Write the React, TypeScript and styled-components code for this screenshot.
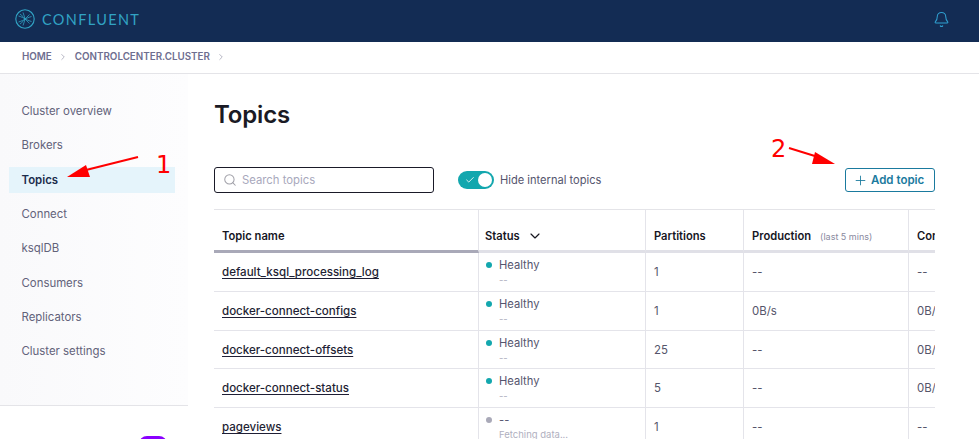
import styled, { createGlobalStyle } from "styled-components";
import { Bell, Check, ChevronDown, ChevronRight, Plus, Search } from "lucide-react";

const GlobalStyle = createGlobalStyle`
  html, body {
    margin: 0;
    height: 100%;
    overflow: hidden;
    background: #fff;
  }
  body {
    font-family: Inter, "Liberation Sans", sans-serif;
  }
`;

const Page = styled.div`
  height: 439px;
  overflow: hidden;
  position: relative;
  width: 979px;
`;

const TopBar = styled.header`
  align-items: center;
  background: #132c54;
  box-sizing: border-box;
  display: flex;
  height: 42px;
  justify-content: space-between;
  padding: 0 29px 4px 15px;
`;

const Brand = styled.div`
  align-items: center;
  color: #31a3c4;
  display: flex;
  font-family: Lato, Inter, sans-serif;
  font-size: 14.5px;
  gap: 7px;
  letter-spacing: 1.35px;
`;

const NotifyButton = styled.span`
  color: #2f9fd0;
  display: flex;
`;

const Crumbs = styled.nav`
  align-items: center;
  border-bottom: 1px solid #e4e4e8;
  box-sizing: border-box;
  color: #6e6e90;
  display: flex;
  font-size: 9.8px;
  font-weight: 600;
  height: 32px;
  padding: 0 0 2px 22px;
`;

const CrumbArrow = styled.span`
  color: #a8a8b8;
  display: flex;
  margin: 0 7px 0 6px;
`;

const Body = styled.div`
  display: flex;
  height: 365px;
`;

const Sidebar = styled.aside`
  background: linear-gradient(90deg, #f9f9fb, #fdfdfe);
  flex: 0 0 188px;
  overflow: hidden;
  padding-top: 24px;
  position: relative;
`;

const NavItem = styled.div<{ $active?: boolean }>`
  align-items: center;
  background: ${({ $active }) => ($active ? "#e5f4fb" : "transparent")};
  color: ${({ $active }) => ($active ? "#1c2c4c" : "#62627a")};
  display: flex;
  font-size: 11.4px;
  font-weight: ${({ $active }) => ($active ? 600 : 400)};
  height: 26px;
  margin: 0 13px 8.35px 9px;
  padding-left: 12.5px;
`;

const SideFooter = styled.div`
  background: #fff;
  border-top: 1px solid #e4e4e8;
  bottom: 0;
  height: 33px;
  left: 0;
  position: absolute;
  right: 0;
`;

const PurpleBadge = styled.span`
  background: #8a00ff;
  border-radius: 8px;
  height: 24px;
  left: 139px;
  position: absolute;
  top: 30px;
  width: 28px;
`;

const Main = styled.main`
  flex: 1;
  min-width: 0;
  padding: 26px 44px 0 26px;
`;

const Title = styled.h1`
  color: #1a1a24;
  font-size: 24px;
  font-weight: 600;
  letter-spacing: -0.15px;
  line-height: 30px;
  margin: 0 0 37px;
`;

const Toolbar = styled.div`
  align-items: center;
  display: flex;
  height: 26px;
  margin-bottom: 16px;
`;

const SearchBox = styled.label`
  align-items: center;
  border: 1px solid #1a1a28;
  border-radius: 3px;
  box-sizing: border-box;
  color: #a8a8bc;
  display: flex;
  font-size: 11.3px;
  gap: 5px;
  height: 26px;
  padding-left: 8px;
  width: 220px;
`;

const SearchIcon = styled.span`
  color: #a0a0a8;
  display: flex;
`;

const ToggleWrap = styled.div`
  align-items: center;
  color: #55556e;
  display: flex;
  font-size: 11.1px;
  gap: 6px;
  margin-left: 24px;
`;

const ToggleTrack = styled.span`
  align-items: center;
  background: #13a7ae;
  border-radius: 9px;
  box-sizing: border-box;
  color: #fff;
  display: flex;
  height: 18px;
  justify-content: space-between;
  padding: 0 2px 0 7px;
  width: 36px;
`;

const ToggleKnob = styled.span`
  background: #fff;
  border-radius: 50%;
  height: 14px;
  width: 14px;
`;

const AddButton = styled.button`
  align-items: center;
  background: #fff;
  border: 1px solid #1a7a9e;
  border-radius: 3px;
  box-sizing: border-box;
  color: #1a7a9e;
  display: flex;
  font-family: inherit;
  font-size: 11.5px;
  font-weight: 600;
  gap: 3px;
  height: 24px;
  margin-left: auto;
  padding: 0 0 0 7px;
  white-space: nowrap;
  width: 90px;
`;

const TableClip = styled.div`
  border-top: 1px solid #e4e4e8;
  overflow: hidden;
  width: 721px;
`;

const Table = styled.div`
  width: 800px;
`;

const Row = styled.div<{ $height: number }>`
  border-bottom: 1px solid #e4e4ea;
  box-sizing: border-box;
  display: grid;
  grid-template-columns: 265px 167px 98px 165px 92px;
  height: ${({ $height }) => $height}px;
`;

const HeadRow = styled(Row)`
  border-bottom: 0;
`;

const HeadCell = styled.div<{ $first?: boolean; $inset?: number }>`
  align-items: center;
  border-bottom: 3px solid ${({ $first }) => ($first ? "#a9a9b8" : "#e0e0e7")};
  border-right: 1px solid #e4e4ea;
  color: #16161f;
  display: flex;
  font-size: 11.2px;
  font-weight: 600;
  gap: 7px;
  padding: 12px 0 0 ${({ $inset }) => $inset ?? 8}px;
  white-space: nowrap;
`;

const HeadNote = styled.span`
  color: #8a8aa0;
  font-size: 9px;
  font-weight: 400;
  margin-left: 2px;
`;

const Cell = styled.div`
  align-items: center;
  border-right: 1px solid #e4e4ea;
  color: #55556a;
  display: flex;
  font-size: 11.4px;
  padding-left: 8px;
  white-space: nowrap;
`;

const TopicLink = styled.a`
  color: #1f1f35;
  font-size: 11.55px;
  font-weight: 500;
  text-decoration: underline;
  text-underline-offset: 2px;
`;

const StatusCell = styled.div`
  border-right: 1px solid #e4e4ea;
  display: grid;
  grid-template-columns: 13px 1fr;
  padding: 5px 0 0 7px;
`;

const Dot = styled.span<{ $muted?: boolean }>`
  background: ${({ $muted }) => ($muted ? "#a9a9b8" : "#13a7ae")};
  border-radius: 50%;
  height: 6px;
  margin-top: 4px;
  width: 6px;
`;

const StatusText = styled.div`
  color: #55556e;
  font-size: 11.2px;
  line-height: 15px;
`;

const StatusNote = styled.div`
  color: #b0b0c0;
  font-size: 9.5px;
  line-height: 12px;
  margin-top: 1px;
  white-space: nowrap;
`;

const Annotations = styled.svg`
  height: 439px;
  left: 0;
  pointer-events: none;
  position: absolute;
  top: 0;
  width: 979px;
`;

const Callout = styled.span<{ $left: number; $top: number }>`
  color: #ff0000;
  font-family: "DejaVu Sans", sans-serif;
  font-size: 24px;
  left: ${({ $left }) => $left}px;
  line-height: 28px;
  position: absolute;
  top: ${({ $top }) => $top}px;
`;

const navItems = [
  "Cluster overview",
  "Brokers",
  "Topics",
  "Connect",
  "ksqlDB",
  "Consumers",
  "Replicators",
  "Cluster settings",
];

const topics = [
  { name: "default_ksql_processing_log", partitions: "1", production: "--", consumption: "--", height: 39 },
  { name: "docker-connect-configs", partitions: "1", production: "0B/s", consumption: "0B/s", height: 39 },
  { name: "docker-connect-offsets", partitions: "25", production: "--", consumption: "0B/s", height: 38 },
  { name: "docker-connect-status", partitions: "5", production: "--", consumption: "0B/s", height: 39 },
  { name: "pageviews", partitions: "1", production: "--", consumption: "--", height: 39, pending: true },
];

function ConfluentMark() {
  return (
    <svg width="20" height="20" viewBox="0 0 20 20" fill="none" stroke="#31a3c4">
      <circle cx="10" cy="10" r="9.2" strokeWidth="1.1" />
      <path d="M3.5 7C7 8 8.5 9 10 10 8.5 11 7 12 3.5 13M5 5C7.5 7 9 8.5 10 10 9 11.5 7.5 13 5 15M8 3.5C9 6 9.5 8 10 10 9.5 12 9 14 8 16.5" strokeWidth="0.8" />
      <path d="M16.5 7.5C13 8.5 11.5 9.5 10 10 11.5 10.5 13 11.5 16.5 12.5M14.5 5.5C12.5 7.5 11 9 10 10 11 11 12.5 12.5 14.5 14.5" strokeWidth="0.8" />
    </svg>
  );
}

export default function App() {
  return (
    <Page>
      <GlobalStyle />
      <TopBar>
        <Brand>
          <ConfluentMark />
          CONFLUENT
        </Brand>
        <NotifyButton>
          <Bell size={17} strokeWidth={1.5} />
        </NotifyButton>
      </TopBar>
      <Crumbs>
        HOME
        <CrumbArrow><ChevronRight size={10} /></CrumbArrow>
        CONTROLCENTER.CLUSTER
        <CrumbArrow><ChevronRight size={10} /></CrumbArrow>
      </Crumbs>
      <Body>
        <Sidebar>
          {navItems.map((item) => (
            <NavItem key={item} $active={item === "Topics"}>{item}</NavItem>
          ))}
          <SideFooter>
            <PurpleBadge />
          </SideFooter>
        </Sidebar>
        <Main>
          <Title>Topics</Title>
          <Toolbar>
            <SearchBox>
              <SearchIcon><Search size={14} strokeWidth={1.75} /></SearchIcon>
              Search topics
            </SearchBox>
            <ToggleWrap>
              <ToggleTrack>
                <Check size={10} strokeWidth={2} />
                <ToggleKnob />
              </ToggleTrack>
              Hide internal topics
            </ToggleWrap>
            <AddButton>
              <Plus size={15} strokeWidth={1.4} />
              Add topic
            </AddButton>
          </Toolbar>
          <TableClip>
            <Table>
              <HeadRow $height={43}>
                <HeadCell $first>Topic name</HeadCell>
                <HeadCell $inset={6}>Status <ChevronDown size={16} strokeWidth={1.75} /></HeadCell>
                <HeadCell>Partitions</HeadCell>
                <HeadCell>Production <HeadNote>(last 5 mins)</HeadNote></HeadCell>
                <HeadCell>Consumption</HeadCell>
              </HeadRow>
              {topics.map((topic) => (
                <Row key={topic.name} $height={topic.height}>
                  <Cell><TopicLink>{topic.name}</TopicLink></Cell>
                  <StatusCell>
                    <Dot $muted={topic.pending} />
                    <div>
                      <StatusText>{topic.pending ? "--" : "Healthy"}</StatusText>
                      <StatusNote>{topic.pending ? "Fetching data..." : "--"}</StatusNote>
                    </div>
                  </StatusCell>
                  <Cell>{topic.partitions}</Cell>
                  <Cell>{topic.production}</Cell>
                  <Cell>{topic.consumption}</Cell>
                </Row>
              ))}
            </Table>
          </TableClip>
        </Main>
      </Body>
      <Annotations viewBox="0 0 979 439">
        <path d="M138 157 86 170" stroke="#ff0000" strokeWidth="2" />
        <path d="M67 177 86 165 90 177Z" fill="#ff0000" />
        <path d="M789 148 818 157" stroke="#ff0000" strokeWidth="2" />
        <path d="M835 164 815 152 812 164Z" fill="#ff0000" />
      </Annotations>
      <Callout $left={156} $top={151}>1</Callout>
      <Callout $left={771} $top={135}>2</Callout>
    </Page>
  );
}
